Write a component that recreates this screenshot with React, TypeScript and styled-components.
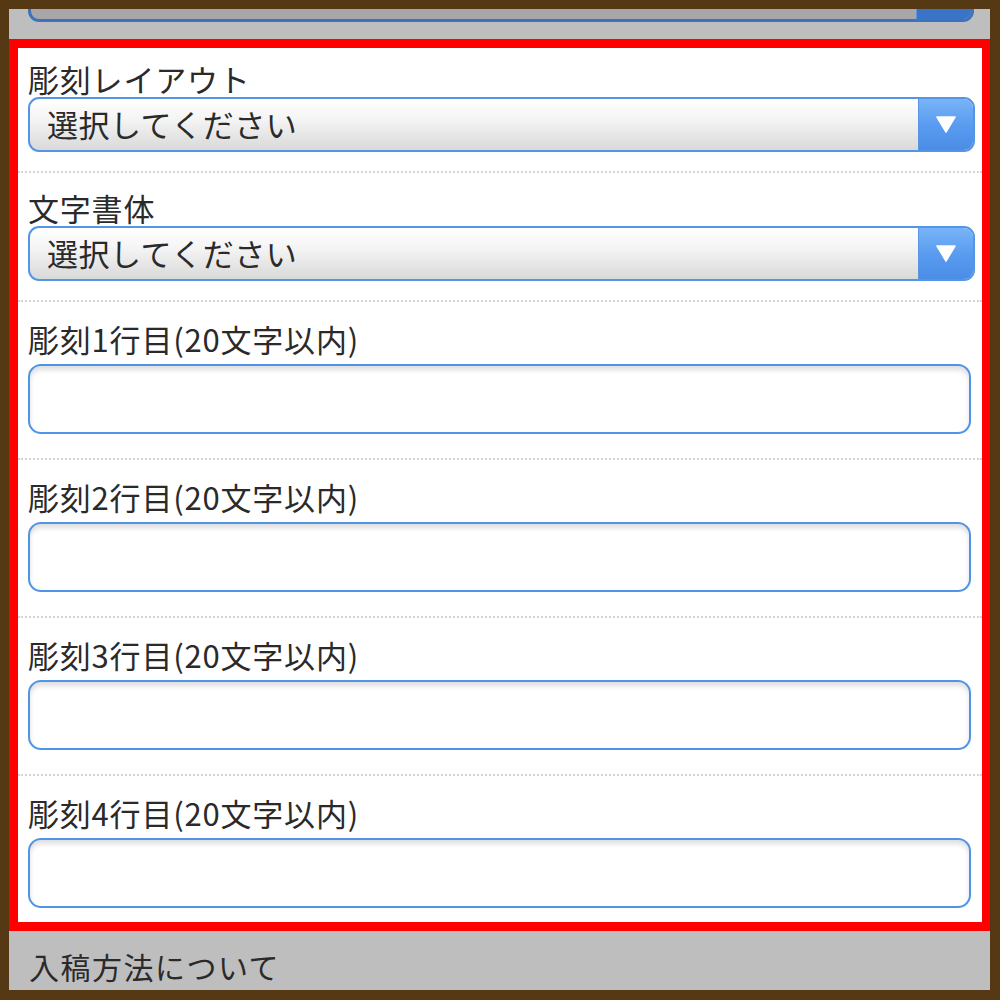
import React from 'react'
import styled, { createGlobalStyle, css } from 'styled-components'

const GlobalStyle = createGlobalStyle`
    html, body {
        margin: 0;
        padding: 0;
        background: #553914;
    }
    body {
        font-family: "Noto Sans CJK JP", "Noto Sans", sans-serif;
        color: #222;
    }
`

const Frame = styled.div`
    width: 1000px;
    height: 1000px;
    box-sizing: border-box;
    padding: 9px 10px 10px 9px;
    background: #553914;
`

const Panel = styled.div`
    height: 100%;
    background: #bebebe;
    display: flex;
    flex-direction: column;
    overflow: hidden;
`

const Highlight = styled.div`
    margin-top: 17px;
    border: 9px solid #ff0000;
    border-right-width: 8px;
    background: #fff;
`

const Section = styled.div<{ $field?: boolean }>`
    padding: ${(p) => (p.$field ? '20px 11px 24px 10px' : '18px 7px 19px 10px')};
    border-bottom: 2px dotted #d4d4d4;

    &:first-child {
        padding-top: 14px;
    }
    &:last-child {
        border-bottom: none;
        padding-bottom: 14px;
    }
`

const Label = styled.div`
    font-size: 31px;
    line-height: 34px;
    letter-spacing: 0.8px;
    color: #2a2a2a;
    white-space: nowrap;
`

const SelectShell = styled.div<{ $dim?: boolean }>`
    display: flex;
    height: 55px;
    box-sizing: border-box;
    margin-top: 1px;
    border: 2px solid #5595e5;
    border-radius: 11px;
    overflow: hidden;
    background: linear-gradient(#ffffff, #f4f4f4 40%, #d9d9d9);

    ${(p) =>
        p.$dim &&
        css`
            flex: none;
            margin: -42px 16px 0 19px;
            border: 3px solid #3e72bd;
            background: #a7a7a7;
        `}
`

const NativeSelect = styled.select`
    flex: 1;
    min-width: 0;
    appearance: none;
    -webkit-appearance: none;
    border: none;
    outline: none;
    background: transparent;
    padding: 0 0 2px 17px;
    font-family: inherit;
    font-size: 31px;
    letter-spacing: 0.5px;
    color: #2a2a2a;
`

const ArrowButton = styled.div<{ $dim?: boolean }>`
    width: 54px;
    display: flex;
    align-items: center;
    justify-content: center;
    border-left: 1px solid #5a97e0;
    background: ${(p) =>
        p.$dim ? '#3a74c8' : 'linear-gradient(#78b4f7, #5a9cf0 50%, #4b8de6)'};
`

const TextField = styled.input`
    display: block;
    width: 100%;
    height: 70px;
    box-sizing: border-box;
    margin-top: 8px;
    border: 2px solid #5094e6;
    border-radius: 13px;
    box-shadow: inset 0 4px 5px rgba(0, 0, 0, 0.13);
    background: #fff;
    outline: none;
    padding: 0 16px;
    font-family: inherit;
    font-size: 31px;
`

const Footer = styled.div`
    padding: 17px 20px 0;
    font-size: 30px;
    line-height: 36px;
    letter-spacing: 1.5px;
    color: #2a2a2a;
`

const Arrow = () => (
    <svg width="20" height="17" viewBox="0 0 20 17">
        <path d="M1 1 L19 1 L10 16 Z" fill="#fff" stroke="#fff" strokeWidth="1.5" strokeLinejoin="round" />
    </svg>
)

const placeholder = '選択してください'

const SelectField = (props: { label: string }) => (
    <Section>
        <Label>{props.label}</Label>
        <SelectShell>
            <NativeSelect defaultValue="">
                <option value="">{placeholder}</option>
            </NativeSelect>
            <ArrowButton>
                <Arrow />
            </ArrowButton>
        </SelectShell>
    </Section>
)

const lines = [1, 2, 3, 4]

const App = () => {
    return (
        <>
            <GlobalStyle />
            <Frame>
                <Panel>
                    <SelectShell $dim>
                        <NativeSelect defaultValue="" disabled>
                            <option value="" />
                        </NativeSelect>
                        <ArrowButton $dim />
                    </SelectShell>
                    <Highlight>
                        <SelectField label="彫刻レイアウト" />
                        <SelectField label="文字書体" />
                        {lines.map((n) => (
                            <Section $field key={n}>
                                <Label>{`彫刻${n}行目(20文字以内)`}</Label>
                                <TextField type="text" />
                            </Section>
                        ))}
                    </Highlight>
                    <Footer>入稿方法について</Footer>
                </Panel>
            </Frame>
        </>
    )
}
export default App
